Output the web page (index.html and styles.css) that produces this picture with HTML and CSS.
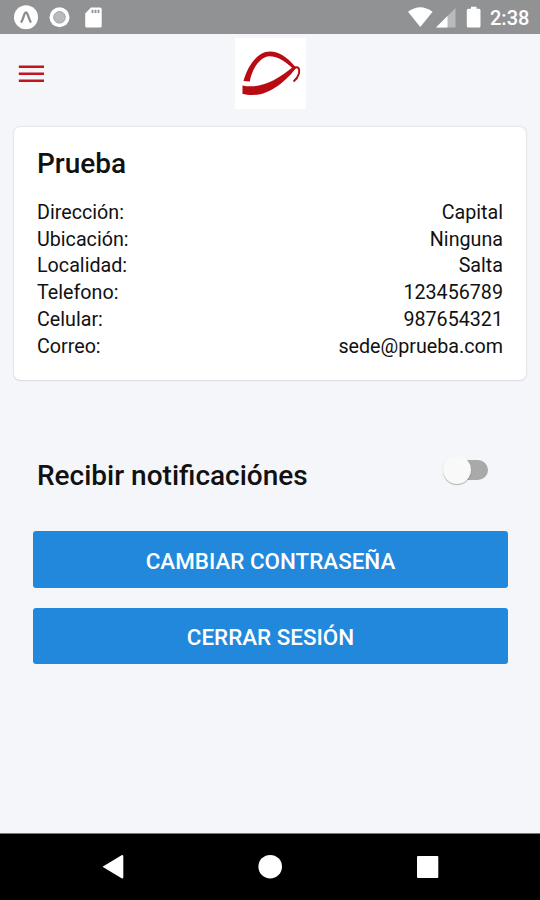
FILE: index.html
```html
<!DOCTYPE html>
<html lang="es">
<head>
    <meta charset="utf-8" />
    <title>Perfil</title>
    <link rel="stylesheet" href="styles.css">
</head>
<body>
    <div class="estado">
        <svg class="iconosIzq" width="110" height="34" viewBox="0 0 110 34">
            <circle cx="26" cy="17.3" r="12" fill="#fff" />
            <path d="M21 22.5 C23.5 19 24 12.5 26 12.5 S28.500 19 31 22.500" fill="none" stroke="#8d8e90" stroke-width="2.300" />
            <circle cx="59.500" cy="17.300" r="10" fill="#fff" />
            <circle cx="59.500" cy="17.300" r="5.800" fill="#b9babb" stroke="#a3a4a5" stroke-width="1" />
            <path d="M91 7.500 H100 Q101.700 7.500 101.700 9.200 V26 Q101.700 27.500 100 27.500 H87 Q85.200 27.500 85.200 26 V13.500 Z" fill="#fff" />
            <path d="M92.500 9.800 V13 M95.500 9.800 V13 M98.500 9.800 V13" stroke="#919293" stroke-width="1.800" />
        </svg>
        <div class="estadoDer">
            <svg width="74" height="34" viewBox="408 0 74 34">
                <path d="M408 11.800 Q420.300 2.500 432.600 11.800 L420.300 27 Z" fill="#fff" />
                <path d="M436 27.500 L455.500 8 V27.500 Z" fill="#b9babb" />
                <path d="M436 27.500 L447.500 16 V27.500 Z" fill="#fff" />
                <path d="M471 6.700 H476.500 V8.700 H479 Q480.500 8.700 480.500 10.200 V26 Q480.500 27.500 479 27.500 H468.300 Q466.800 27.500 466.800 26 V10.200 Q466.800 8.700 468.300 8.700 H471 Z" fill="#fff" />
            </svg>
            <span class="hora">2:38</span>
        </div>
    </div>

    <div class="cabecera">
        <svg class="menu" width="26" height="18" viewBox="0 0 26 18">
            <path d="M0.800 1.800 H26 M0.800 8.800 H26 M0.800 15.800 H26" stroke="#c3161c" stroke-width="2.400" />
        </svg>
        <svg class="logo" width="71" height="71" viewBox="0 0 71 71">
            <rect width="71" height="71" fill="#fff" />
            <path d="M8.500 43 C13 27 23 13.500 35 13.500 C44 13.500 52 19 60.500 29 L58.500 31 C50 23 43 18.200 34.500 18.200 C26 18.200 17 30 14.800 43.500 Z" fill="#b90b12" />
            <path d="M7.500 47.500 C24 51 41 43.500 59 28 L62 29 C51 43 35 57 18 57 C14 57 10 56.500 7.500 56 Z" fill="#b90b12" />
            <path d="M60 30 C63 27.500 65 31 64 35.500 Q62.500 40.500 58.500 43.500" fill="none" stroke="#b90b12" stroke-width="2" />
        </svg>
    </div>

    <div class="tarjeta">
        <h2>Prueba</h2>
        <div class="fila"><span>Dirección:</span><span>Capital</span></div>
        <div class="fila"><span>Ubicación:</span><span>Ninguna</span></div>
        <div class="fila"><span>Localidad:</span><span>Salta</span></div>
        <div class="fila"><span>Telefono:</span><span>123456789</span></div>
        <div class="fila"><span>Celular:</span><span>987654321</span></div>
        <div class="fila"><span>Correo:</span><span>sede@prueba.com</span></div>
    </div>

    <div class="notificaciones">
        <h2>Recibir notificaciónes</h2>
        <div class="interruptor"><div class="perilla"></div></div>
    </div>

    <div class="botones">
        <button class="boton" type="button">CAMBIAR CONTRASEÑA</button>
        <button class="boton" type="button">CERRAR SESIÓN</button>
    </div>

    <div class="navegacion">
        <svg width="540" height="66" viewBox="0 0 540 66">
            <path d="M102.500 32.700 L122 21 Q123.300 21 123.300 22 V43.500 Q123.300 44.500 122 44.500 Z" fill="#fff" />
            <circle cx="270.200" cy="32.700" r="11.800" fill="#fff" />
            <rect x="417" y="22" width="21.300" height="22" rx="1" fill="#fff" />
        </svg>
    </div>
</body>
</html>
```
FILE: styles.css
```css
body {
    margin: 0;
    height: 900px;
    display: flex;
    flex-direction: column;
    overflow: hidden;
    background-color: #f4f6fa;
    font-family: Roboto, sans-serif;
    color: #111;
}
svg {
    display: block;
}
h2 {
    margin: 0;
    font-size: 28px;
    font-weight: 500;
    line-height: 32px;
}
.estado {
    height: 34px;
    display: flex;
    justify-content: space-between;
    background-color: #919294;
}
.estadoDer {
    display: flex;
    padding-right: 11px;
}
.hora {
    width: 39px;
    margin-left: 8px;
    color: #fff;
    font-size: 20px;
    font-weight: 500;
    line-height: 36px;
    white-space: nowrap;
}
.cabecera {
    height: 79px;
    display: grid;
    grid-template-columns: 1fr 71px 1fr;
    align-items: center;
}
.menu {
    margin-left: 18px;
}
.tarjeta {
    box-sizing: border-box;
    height: 253px;
    margin: 14px 14px 0;
    padding: 21px 23px 0;
    border-radius: 6px;
    background-color: #fff;
    box-shadow: 0 0 2px rgba(0, 0, 0, .22), 0 1px 1px rgba(0, 0, 0, .06);
}
.tarjeta h2 {
    margin-bottom: 20px;
}
.fila {
    display: flex;
    justify-content: space-between;
    font-size: 19.7px;
    line-height: 26.7px;
}
.notificaciones {
    display: flex;
    justify-content: space-between;
    margin: 80px 52px 0 37px;
}
.interruptor {
    width: 42px;
    height: 20px;
    border-radius: 10px;
    background-color: #a9a9a9;
}
.perilla {
    width: 28px;
    height: 28px;
    margin: -4px 0 0 -3px;
    border-radius: 50%;
    background-color: #f9f9f9;
    box-shadow: 0 1px 1px rgba(0, 0, 0, .3);
}
.botones {
    display: flex;
    flex-direction: column;
    gap: 20px;
    margin: 39px 32px 0 33px;
}
.boton {
    height: 56.5px;
    padding: 3px 0 0;
    border: 0;
    border-radius: 3px;
    background-color: #2188dc;
    color: #fff;
    font-family: Roboto, sans-serif;
    font-size: 22.4px;
    font-weight: 500;
}
.navegacion {
    height: 66px;
    margin-top: auto;
    border-top: 1px solid #777;
    background-color: #000;
}
```
